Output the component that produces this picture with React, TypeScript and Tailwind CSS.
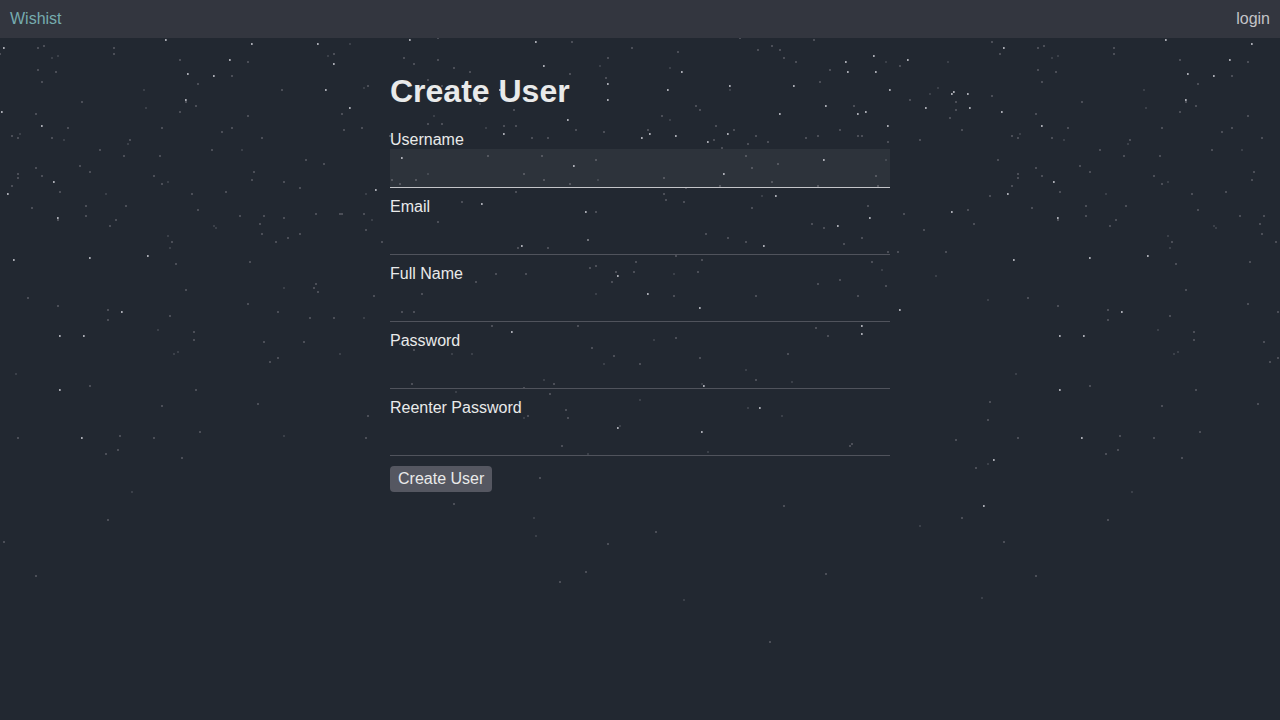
type Point = [number, number];

const BRIGHT: Point[] = [
  [166,40],[4,48],[230,60],[188,74],[214,76],[186,100],[2,112],[42,126],[54,182],[8,194],[58,218],
  [14,260],[90,258],[148,256],[122,312],[60,336],[84,336],[60,390],[82,438],
  [252,44],[318,44],[410,40],[334,64],[326,90],[350,108],[402,158],[376,190],[482,204],[500,90],
  [536,42],[544,66],[682,72],[608,84],[668,90],[730,86],[608,100],[568,120],[504,134],[650,134],[642,138],
  [676,136],[708,142],[728,134],[574,166],[724,174],[586,212],
  [522,246],[618,276],[648,294],[700,308],[512,332],[704,386],[618,428],[702,432],
  [874,56],[846,62],[908,60],[848,72],[876,72],[794,86],[890,90],[954,92],[952,94],[968,94],[826,106],
  [926,108],[970,108],[866,112],[780,114],[858,114],[888,126],[824,160],[776,196],[952,212],[870,218],[838,226],
  [764,246],[900,310],[862,326],[862,334],[760,408],[994,460],[984,506],
];

const DIM: Point[] = [
  [44,46],[38,48],[114,48],[0,54],[114,54],[180,60],[248,62],[38,70],[56,72],[42,82],[232,76],
  [198,84],[82,102],[186,102],[196,106],[36,114],[180,112],[248,116],[68,128],[162,128],[232,128],
  [222,132],[12,136],[18,138],[52,138],[130,140],[100,150],[212,150],[124,156],[160,156],[80,166],
  [36,168],[90,172],[18,174],[18,178],[42,176],[154,176],[162,184],[12,186],[60,192],[226,192],[192,194],
  [32,208],[86,206],[126,206],[198,210],[240,216],[86,216],[58,220],[116,220],[110,226],
  [172,242],[176,264],[250,262],[28,298],[58,306],[186,290],[108,310],[108,320],[248,304],[170,316],
  [194,332],[194,340],[90,386],[196,390],[162,406],[200,432],[18,438],[120,436],[154,438],
  [118,450],[106,454],[182,458],[108,520],[4,542],[36,576],
  [438,38],[334,54],[404,58],[414,64],[438,60],[454,68],[470,72],[428,80],[442,86],[368,86],
  [282,90],[342,114],[480,104],[428,124],[442,124],[362,128],[344,130],[390,136],[262,138],
  [306,160],[324,164],[488,156],[254,172],[252,180],[284,182],[392,180],[416,180],[400,184],
  [300,188],[462,202],[264,216],[316,214],[340,214],[342,214],[364,214],[284,218],[438,222],
  [260,224],[366,230],[262,234],[300,234],[288,238],[276,242],[382,242],[316,284],[314,288],
  [318,292],[374,296],[422,294],[476,282],[496,274],[278,312],[402,312],[414,312],[310,318],[334,318],
  [492,326],[264,342],[304,342],[400,344],[414,350],[278,358],[270,362],[412,384],
  [258,404],[368,416],[366,438],[454,504],
  [740,38],[572,42],[632,48],[678,52],[608,58],[570,74],[606,78],[696,106],
  [700,110],[514,110],[662,116],[504,126],[516,126],[716,126],[576,130],[604,132],[648,130],[734,130],
  [714,140],[532,138],[548,138],[748,144],[722,148],[542,156],[746,156],[596,160],[524,174],[544,180],
  [664,178],[570,184],[720,186],[686,188],[516,192],[664,194],[666,200],[684,202],[596,212],
  [706,234],[728,238],[746,242],[518,248],[548,248],[676,256],[702,260],[636,262],[596,266],[590,268],
  [616,272],[634,272],[698,272],[526,274],[612,282],[674,296],[578,326],[676,338],
  [592,348],[614,356],[640,364],[700,358],[554,384],[524,388],[550,394],
  [566,410],[568,418],[528,416],[562,446],[540,478],[656,532],[608,544],[586,572],[560,582],
  [814,40],[992,42],[772,46],[758,50],[780,50],[784,58],[796,62],[900,66],[830,70],
  [820,82],[992,96],[910,100],[956,102],[956,110],[854,106],[950,118],[840,130],
  [962,130],[756,136],[818,136],[806,138],[858,136],[862,136],[920,140],[768,142],[888,142],[998,160],
  [778,164],[752,168],[876,176],[772,182],[818,186],[878,186],[990,196],[868,206],[752,208],
  [968,210],[904,214],[812,224],[974,224],[824,228],[924,230],
  [862,238],[844,244],[888,252],[898,252],[946,252],[872,262],[840,280],[818,284],[886,286],
  [756,296],[858,296],[816,328],[828,336],[788,354],[756,380],[850,446],[852,444],
  [990,402],[988,420],[956,440],[976,468],[784,506],[962,518],[826,574],[770,642],
];

const FAINT: Point[] = [
  [58,56],[52,58],[144,90],[146,108],[20,134],[64,140],[128,144],[242,150],[168,182],[106,194],[214,226],
  [216,228],[168,236],[170,248],[158,330],[178,352],[174,354],[16,374],[132,492],
  [350,44],[328,56],[364,88],[434,116],[486,128],[428,174],[366,194],[372,220],[284,288],[364,318],
  [452,354],[472,354],[340,354],[456,392],[284,436],
  [600,66],[670,68],[730,90],[670,120],[598,180],[674,274],[596,294],[654,340],[604,364],[746,370],[544,380],
  [702,384],[524,418],[640,400],[748,408],[620,426],[588,454],[708,452],[534,518],[536,536],[684,600],
  [886,62],[948,62],[938,88],[930,94],[886,160],[762,196],[882,270],[936,276],[988,300],[792,382],
  [782,416],[988,464],[920,526],[982,598],
];

const MEDIUM: Point[] = [[588,240]];

const dots = (points: Point[], width = 2, offset = -1) =>
  points.map(([x, y]) => `M${x + offset} ${y - 1}h${width}v2h${-width}z`).join("");

// The field repeats every 1000px horizontally.
function Starfield() {
  return (
    <svg className="absolute top-0 left-0" width="1280" height="720" viewBox="0 0 1280 720" aria-hidden="true">
      <g id="stars">
        <path d={dots(FAINT)} fill="#3b4049" />
        <path d={dots(DIM)} fill="#4b4e57" />
        <path d={dots(MEDIUM)} fill="#70737a" />
        <path d={dots(BRIGHT, 1, -1)} fill="#a9abb2" />
        <path d={dots(BRIGHT, 1, 0)} fill="#7e818a" />
      </g>
      <use href="#stars" x="1000" />
    </svg>
  );
}

const FIELDS = [
  { label: "Username", type: "text" },
  { label: "Email", type: "email" },
  { label: "Full Name", type: "text" },
  { label: "Password", type: "password" },
  { label: "Reenter Password", type: "password" },
];

export default function App() {
  return (
    <div className="relative h-screen overflow-hidden bg-[#222831] font-['Liberation_Sans',Arial,sans-serif] text-base leading-[18px] text-[#e9eaea]">
      <Starfield />
      <div className="relative">
        <nav className="flex h-[38px] items-center justify-between bg-[#33363f] px-2.5">
          <a href="#" className="text-[#76abae]">Wishist</a>
          <a href="#" className="text-[#c3c4c8]">login</a>
        </nav>
        <main className="mx-auto w-[500px] pt-[34px]">
          <h1 className="mb-[21px] text-[32px] leading-[38px] font-bold">Create User</h1>
          <form>
            {FIELDS.map(({ label, type }, i) => (
              <label key={label} className="mb-[10px] block">
                <span className="block">{label}</span>
                <input
                  type={type}
                  className={
                    i === 0
                      ? "block h-[39px] w-full border-b border-[#c3c4c8] bg-white/5 outline-none"
                      : "block h-[39px] w-full border-b border-[#50535c] bg-transparent outline-none"
                  }
                />
              </label>
            ))}
            <button type="button" className="block h-[26px] rounded-[4px] bg-[#555761] px-2">
              Create User
            </button>
          </form>
        </main>
      </div>
    </div>
  );
}
